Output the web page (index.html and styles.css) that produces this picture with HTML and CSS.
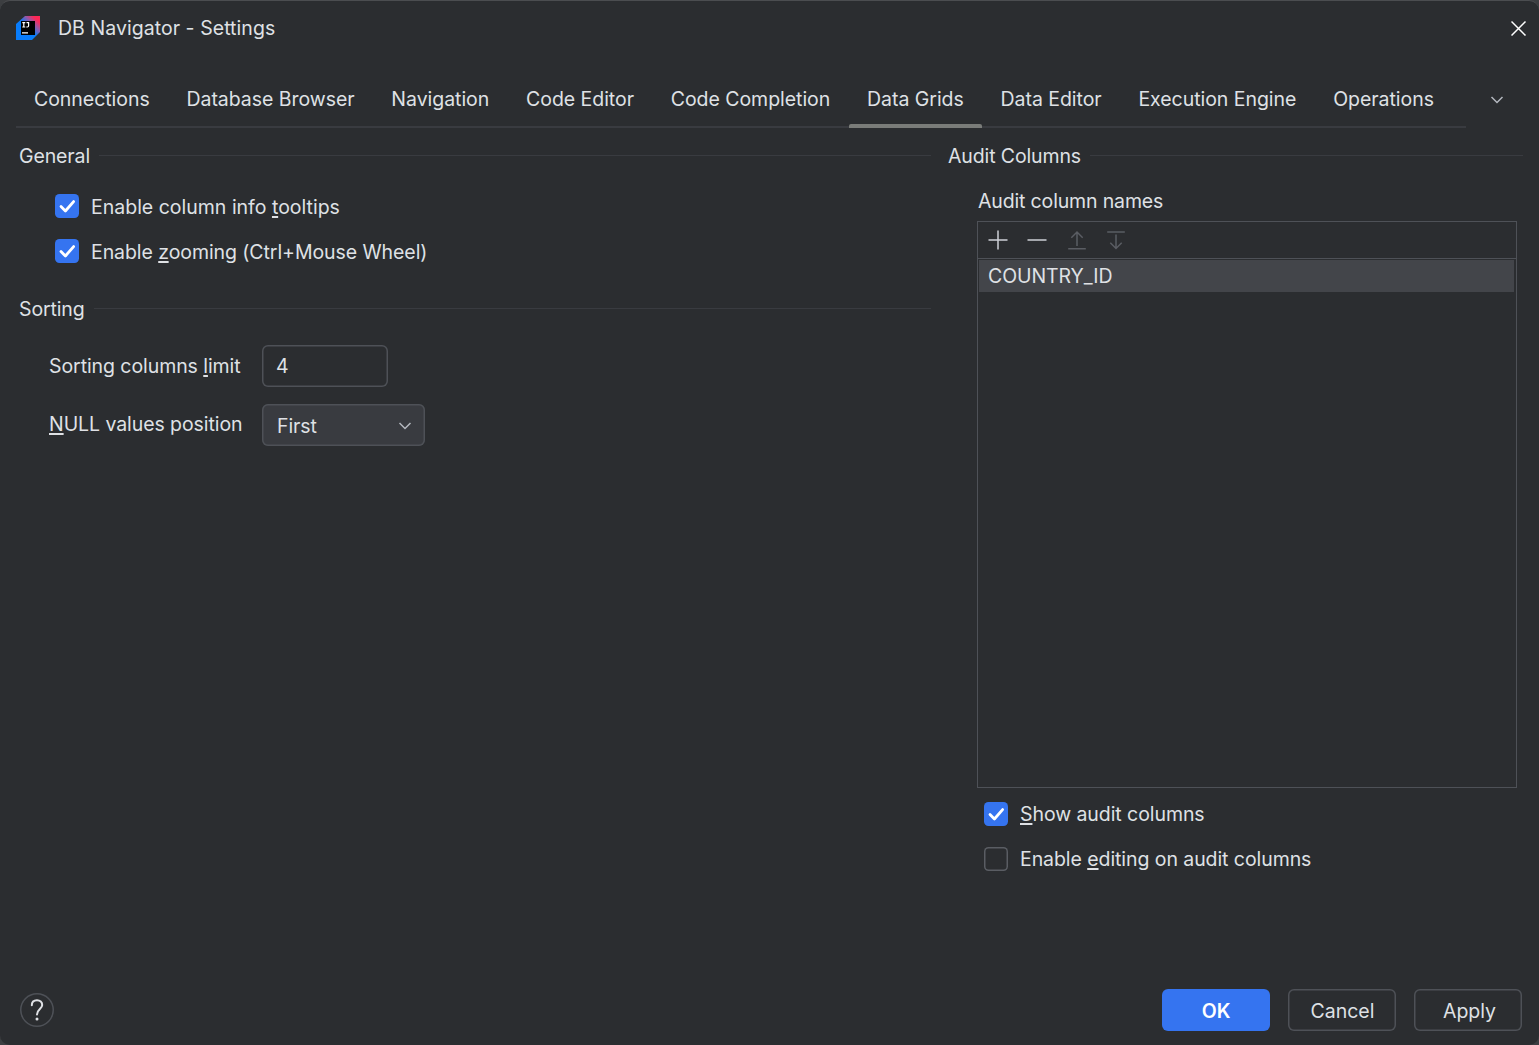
FILE: index.html
```html
<!DOCTYPE html>
<html lang="en">

<head>
    <meta charset="UTF-8">
    <meta name="viewport" content="width=device-width, initial-scale=1.0">
    <title>DB Navigator - Settings</title>
    <link rel="stylesheet" href="styles.css">
</head>

<body>
    <div class="dialog">
        <header class="title-bar">
            <svg class="logo" width="24" height="24" viewBox="0 0 24 24">
                <defs>
                    <linearGradient id="logo-grad" x1="8" y1="8" x2="17" y2="-1" gradientUnits="userSpaceOnUse">
                        <stop offset="0" stop-color="#087cfa" />
                        <stop offset="0.5" stop-color="#9059a9" />
                        <stop offset="0.95" stop-color="#fe2857" />
                    </linearGradient>
                </defs>
                <path d="M9 0H24V16L16 24H0V8Z" fill="url(#logo-grad)" />
                <rect x="5" y="5" width="14" height="14" fill="#000" />
                <path d="M6.3 6.7H9.3M7.8 6.7V11M6.3 11H9.3M10.5 6.7H12.6V9.8Q12.6 11 11.4 11H10.3M6 16.8H12" fill="none" stroke="#fff" stroke-width="1.2" />
            </svg>
            <h1 class="title">DB Navigator - Settings</h1>
            <button type="button" class="btn-close" aria-label="Close">
                <svg width="16" height="16" viewBox="0 0 16 16"><path d="M.5 1.5L14.5 15.5M14.5 1.5L.5 15.5" /></svg>
            </button>
        </header>

        <nav class="tabs">
            <ul class="tab-list">
                <li class="tab">Connections</li>
                <li class="tab">Database Browser</li>
                <li class="tab">Navigation</li>
                <li class="tab">Code Editor</li>
                <li class="tab">Code Completion</li>
                <li class="tab on">Data Grids</li>
                <li class="tab">Data Editor</li>
                <li class="tab">Execution Engine</li>
                <li class="tab">Operations</li>
            </ul>
            <svg class="chevron" width="14" height="10" viewBox="0 0 14 10"><path d="M1.5 2L7 7.5L12.5 2" /></svg>
        </nav>

        <main class="content">
            <div class="column">
                <h2 class="group-title">General</h2>
                <div class="checks general">
                    <label class="check on"><span class="box"><svg width="24" height="24" viewBox="0 0 24 24"><path d="M6 12.6L10.4 17L18.6 7.6" /></svg></span><span class="wide">Enable column info <u>t</u>ooltips</span></label>
                    <label class="check on"><span class="box"><svg width="24" height="24" viewBox="0 0 24 24"><path d="M6 12.6L10.4 17L18.6 7.6" /></svg></span><span>Enable <u>z</u>ooming (Ctrl+Mouse Wheel)</span></label>
                </div>
                <h2 class="group-title">Sorting</h2>
                <div class="form">
                    <span class="label">Sorting columns <u>l</u>imit</span>
                    <div class="field">4</div>
                    <span class="label null-label"><u>N</u>ULL values position</span>
                    <div class="field select">First
                        <svg class="chevron" width="14" height="10" viewBox="0 0 14 10"><path d="M1.5 2L7 7.5L12.5 2" /></svg>
                    </div>
                </div>
            </div>

            <div class="column">
                <h2 class="group-title">Audit Columns</h2>
                <div class="audit">
                    <div class="list-label">Audit column names</div>
                    <div class="list">
                        <div class="toolbar">
                            <svg width="20" height="20" viewBox="0 0 20 20"><path d="M10 .5V19.5M.5 10H19.5" /></svg>
                            <svg width="20" height="20" viewBox="0 0 20 20"><path d="M.5 10H19.5" /></svg>
                            <svg class="off" width="20" height="20" viewBox="0 0 20 20"><path d="M10 16V2M4.3 7.7L10 2L15.7 7.7M1.2 18.8H18.8" /></svg>
                            <svg class="off" width="20" height="20" viewBox="0 0 20 20"><path d="M10 4.5V18.5M4.3 12.8L10 18.5L15.7 12.8M1.2 2H18.8" /></svg>
                        </div>
                        <div class="list-item">COUNTRY_ID</div>
                    </div>
                    <div class="checks">
                        <label class="check on"><span class="box"><svg width="24" height="24" viewBox="0 0 24 24"><path d="M6 12.6L10.4 17L18.6 7.6" /></svg></span><span><u>S</u>how audit columns</span></label>
                        <label class="check"><span class="box"></span><span>Enable <u>e</u>diting on audit columns</span></label>
                    </div>
                </div>
            </div>
        </main>

        <footer class="buttons">
            <button type="button" class="btn-help" aria-label="Help">
                <svg width="34" height="34" viewBox="0 0 34 34"><path d="M11.8 12.2C11.8 9 14 7.2 17 7.2S22.2 9.1 22.2 12C22.2 16 17 16.2 17 21.5" /><circle cx="17" cy="26" r="1.5" /></svg>
            </button>
            <button type="button" class="btn ok">OK</button>
            <button type="button" class="btn">Cancel</button>
            <button type="button" class="btn apply">Apply</button>
        </footer>
    </div>
</body>

</html>
```
FILE: styles.css
```css
* {
    box-sizing: border-box;
}

body {
    margin: 0;
    background: #3c3e41;
    color: #dfe1e5;
    font-family: Inter, "Liberation Sans", sans-serif;
    font-size: 19.5px;
    line-height: 24px;
    letter-spacing: -0.07px;
    white-space: nowrap;
}

h1,
h2,
ul {
    margin: 0;
    padding: 0;
    font-size: inherit;
    font-weight: 400;
    list-style: none;
}

button {
    padding: 0;
    border: none;
    background: none;
    color: inherit;
    font: inherit;
}

svg {
    display: block;
    flex: none;
    fill: none;
}

u {
    text-underline-offset: 2px;
    text-decoration-thickness: 1.5px;
    text-decoration-skip-ink: none;
}

.dialog {
    display: flex;
    flex-direction: column;
    height: 1045px;
    border-top: 1px solid #4b4d50;
    border-radius: 10px;
    background: #2b2d30;
}

/* title bar */
.title-bar {
    display: flex;
    align-items: center;
    height: 53px;
    padding: 0 13px 0 16px;
}

.title {
    margin-left: 18px;
    letter-spacing: 0.05px;
}

.btn-close {
    margin-left: auto;
    margin-right: -0.5px;
}

.btn-close path {
    stroke: #fff;
    stroke-width: 1.5;
}

/* tabs */
.tabs {
    display: flex;
    height: 56px;
    margin: 18px 35px 0 16px;
}

.tab-list {
    display: flex;
    gap: 0.8px;
    width: 1450px;
    border-bottom: 2px solid #393b40;
    letter-spacing: -0.04px;
}

.tab {
    height: 56px;
    padding: 15px 18px 0;
}

.tab.on {
    position: relative;
}

.tab.on::after {
    content: "";
    position: absolute;
    left: 0;
    right: 0;
    bottom: 0;
    height: 4px;
    border-radius: 2px 2px 0 0;
    background: #7a7c79;
}

.chevron path {
    stroke: #b4b8bf;
    stroke-width: 1.5;
}

.tabs .chevron {
    margin: 23px 0 0 24px;
}

/* content */
.content {
    display: grid;
    grid-template-columns: 912px 575px;
    column-gap: 17px;
    flex: 1;
    padding: 16px 0 0 19px;
}

.group-title {
    display: flex;
    align-items: center;
    gap: 9px;
    height: 24px;
    letter-spacing: -0.12px;
}

.group-title::after {
    content: "";
    flex: 1;
    height: 1px;
    margin-top: -1px;
    background: #393b40;
}

.checks {
    display: flex;
    flex-direction: column;
    gap: 21px;
}

.general {
    padding: 26px 0 34px 36px;
}

.check {
    display: flex;
    gap: 12px;
    height: 24px;
}

.general .check span:last-child {
    padding-top: 1px;
}

.wide {
    letter-spacing: 0;
}

.box {
    width: 24px;
    height: 24px;
    border-radius: 4.5px;
    box-shadow: inset 0 0 0 1.5px #5a5d63;
}

.check.on .box {
    background: #3574f0;
    box-shadow: none;
}

.box path {
    stroke: #fff;
    stroke-width: 2.8;
    stroke-linecap: round;
    stroke-linejoin: round;
}

.form {
    display: grid;
    grid-template-columns: 213px auto;
    justify-content: start;
    align-items: center;
    row-gap: 16.5px;
    padding: 24.4px 0 0 30px;
}

.null-label {
    margin-top: -2px;
}

.field {
    display: flex;
    align-items: center;
    justify-content: space-between;
    width: 126px;
    height: 42px;
    padding: 0 14px;
    border-radius: 6px;
    box-shadow: inset 0 0 0 1.5px #4e5157;
}

.select {
    width: 163px;
    padding: 2px 13px 0 15px;
    background: #393b40;
}

/* audit columns */
.audit {
    padding: 21px 6px 0 29px;
}

.list-label {
    padding-left: 1px;
    letter-spacing: -0.15px;
}

.list {
    height: 567px;
    margin: 8px 0 14px;
    border: 1px solid #4e5157;
}

.toolbar {
    display: flex;
    align-items: center;
    gap: 19.3px;
    height: 37px;
    padding-left: 10px;
    border-bottom: 1px solid #4e5157;
}

.toolbar path {
    stroke: #ced0d6;
    stroke-width: 1.5;
}

.toolbar .off path {
    stroke: #5a5d63;
}

.list-item {
    height: 32px;
    margin: 1px 2px 0 1px;
    padding: 4px 9px;
    background: #43454a;
}

.audit .checks {
    padding-left: 7px;
}

/* buttons */
.buttons {
    display: flex;
    align-items: center;
    gap: 18px;
    padding: 0 17px 14px 20px;
}

.btn-help {
    margin-right: auto;
    border-radius: 50%;
    box-shadow: inset 0 0 0 1.5px #4e5157;
}

.btn-help path {
    stroke: #dfe1e5;
    stroke-width: 2;
    stroke-linecap: round;
}

.btn-help circle {
    fill: #dfe1e5;
}

.btn {
    width: 108px;
    height: 42px;
    padding: 2px 0 0 1px;
    border-radius: 6px;
    box-shadow: inset 0 0 0 1.5px #4e5157;
}

.btn.ok {
    padding-left: 0;
    background: #3574f0;
    box-shadow: none;
    color: #fff;
    font-weight: 600;
}

.btn.apply {
    padding-left: 3px;
}
```
